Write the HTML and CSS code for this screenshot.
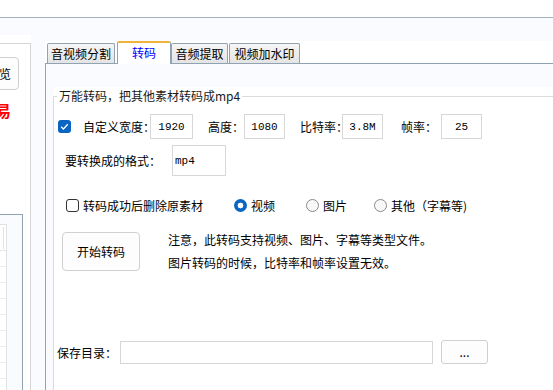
FILE: index.html
```html
<!DOCTYPE html>
<html lang="zh-CN">
<head>
    <meta charset="UTF-8">
    <meta name="viewport" content="width=device-width, initial-scale=1.0">
    <title>转码</title>
    <link rel="stylesheet" href="styles.css">
</head>
<body>
    <div class="topbar"></div>

    <div class="main">
        <aside class="side">
            <div class="side-box">
                <div class="side-btn-row"><button class="btn side-btn">预览</button></div>
                <div class="side-red">交易</div>
                <div class="list-box">
                    <div class="list">
                        <div class="list-head"><span></span></div>
                        <div class="list-row"></div>
                        <div class="list-row"></div>
                        <div class="list-row"></div>
                        <div class="list-row"></div>
                        <div class="list-row"></div>
                        <div class="list-row"></div>
                        <div class="list-row"></div>
                        <div class="list-row"></div>
                        <div class="list-row"></div>
                    </div>
                </div>
            </div>
        </aside>

        <section class="tabs">
            <div class="tab-strip">
                <div class="tab tab-split">音视频分割</div>
                <div class="tab tab-active">转码</div>
                <div class="tab tab-audio">音频提取</div>
                <div class="tab tab-mark">视频加水印</div>
            </div>

            <div class="tab-panel">
                <div class="group">
                    <fieldset class="group-box">
                        <legend>万能转码，把其他素材转码成mp4</legend>

                        <div class="row row-size">
                            <span class="check on">
                                <svg width="13" height="13" viewBox="0 0 13 13"><path d="M3.2 6.8 L5.4 9 L9.8 4.3" fill="none" stroke="#fff" stroke-width="1.3"/></svg>
                            </span>
                            <label class="lbl lbl-width">自定义宽度：</label>
                            <input class="field f-width" type="text" value="1920">
                            <label class="lbl lbl-height">高度：</label>
                            <input class="field f-num" type="text" value="1080">
                            <label class="lbl lbl-rate">比特率：</label>
                            <input class="field f-num" type="text" value="3.8M">
                            <label class="lbl lbl-fps">帧率：</label>
                            <input class="field f-num" type="text" value="25">
                        </div>

                        <div class="row row-format">
                            <label class="lbl lbl-format">要转换成的格式：</label>
                            <input class="field f-format" type="text" value="mp4">
                        </div>

                        <div class="row row-options">
                            <span class="check"></span>
                            <span class="opt-text opt-delete">转码成功后删除原素材</span>
                            <span class="radio on"></span>
                            <span class="opt-text opt-video">视频</span>
                            <span class="radio"></span>
                            <span class="opt-text opt-image">图片</span>
                            <span class="radio"></span>
                            <span class="opt-text">其他（字幕等)</span>
                        </div>

                        <div class="row row-start">
                            <button class="btn start-btn">开始转码</button>
                            <div class="notes">
                                <p>注意，此转码支持视频、图片、字幕等类型文件。</p>
                                <p>图片转码的时候，比特率和帧率设置无效。</p>
                            </div>
                        </div>

                        <div class="row row-save">
                            <label class="lbl lbl-save">保存目录：</label>
                            <input class="field f-path" type="text" value="">
                            <button class="btn browse-btn">...</button>
                        </div>
                    </fieldset>
                </div>
            </div>
        </section>
    </div>
</body>
</html>
```

FILE: styles.css
```css
/* Reset some default styles */
* {
    margin: 0;
    padding: 0;
    box-sizing: border-box;
}

body {
    font-family: "Noto Sans CJK SC", "Noto Sans", sans-serif;
    font-size: 12px;
    color: #1a1a1a;
    background-color: #fafbfe;
    width: 553px;
    height: 390px;
    overflow: hidden;
}

.topbar {
    height: 18px;
    background-color: #fff;
    border-bottom: 1px solid #a3b1bd;
}

.main {
    display: flex;
    gap: 14px;
    height: 372px;
}

/* left panel, mostly cut off */
.side {
    width: 31px;
    flex-shrink: 0;
    margin-top: 17px;
    padding-top: 8px;
    background-color: #fff;
}

.side-box {
    height: 100%;
    border-top: 1px solid #d6d6d6;
    border-right: 1px solid #d6d6d6;
    overflow: hidden;
}

.side-btn-row {
    display: flex;
    justify-content: flex-end;
    padding-right: 11px;
    margin-top: 13px;
}

.side-btn {
    flex-shrink: 0;
    width: 40px;
    height: 33px;
}

.side-red {
    display: flex;
    justify-content: flex-end;
    padding-right: 19px;
    margin-top: 10px;
    color: #ff0000;
    font-size: 16px;
    font-weight: bold;
    line-height: 20px;
    white-space: nowrap;
}

.list-box {
    margin-top: 94px;
    width: 23px;
    height: 200px;
    padding-top: 9px;
    padding-right: 15px;
    background-color: #fafbfe;
    border-top: 1px solid #8fa3b3;
    border-right: 1px solid #8fa3b3;
}

.list {
    height: 100%;
    background-color: #fff;
    border-top: 1px solid #e2e2e2;
    border-right: 1px solid #e2e2e2;
}

.list-head {
    height: 26px;
    border-bottom: 1px solid #e6e6e6;
    padding: 2px 0 0 3px;
}

.list-head span {
    display: block;
    width: 1px;
    height: 22px;
    background-color: #e2e2e2;
}

.list-row {
    height: 16px;
    border-bottom: 1px solid #ececec;
}

/* tab control */
.tabs {
    flex: 1;
    margin-top: 23px;
    display: flex;
    flex-direction: column;
    min-width: 520px;
}

.tab-strip {
    height: 22px;
    display: flex;
    align-items: flex-end;
    padding-left: 2px;
    background-color: #fff;
}

.tab {
    height: 20px;
    line-height: 19px;
    text-align: center;
    white-space: nowrap;
    color: #000;
    border: 1px solid #8fa3b3;
    border-bottom: none;
    border-radius: 2px 2px 0 0;
    background: linear-gradient(#f6f6f6, #e4e4e4);
}

.tab-split {
    width: 68px;
}

.tab-active {
    position: relative;
    z-index: 1;
    width: 54px;
    height: 23px;
    margin: 0 0 -1px 2px;
    line-height: 20px;
    color: #0000ff;
    background: #fff;
    border-top: 2px solid #f0b43c;
}

.tab-audio {
    width: 57px;
}

.tab-mark {
    width: 71px;
    margin-left: 1px;
}

.tab-panel {
    flex: 1;
    border-top: 1px solid #8fa3b3;
    border-left: 1px solid #8fa3b3;
    padding: 23px 0 0 7px;
}

.group {
    height: 100%;
    background-color: #fff;
}

.group-box {
    height: 320px;
    border: 1px solid #dcdcdc;
    padding: 0;
    min-width: 0;
}

.group-box legend {
    margin-left: 3px;
    padding: 0 2px;
    line-height: 18px;
    color: #1a1a1a;
}

.row {
    display: flex;
    align-items: center;
    white-space: nowrap;
}

.lbl {
    color: #000;
    flex-shrink: 0;
}

.field {
    flex-shrink: 0;
    height: 25px;
    border: 1px solid #d7d7d7;
    background-color: #fff;
    font-family: "Liberation Mono", monospace;
    font-size: 11px;
    color: #000;
    text-align: center;
    outline: none;
}

.row-size {
    margin-top: 9px;
    height: 25px;
    padding-left: 4px;
}

.lbl-width {
    margin-left: 12px;
    width: 67px;
}

.f-width {
    width: 43px;
}

.f-num {
    width: 41px;
}

.lbl-height {
    margin-left: 15px;
    width: 36px;
}

.lbl-rate {
    margin-left: 15px;
    width: 42px;
}

.lbl-fps {
    margin-left: 18px;
    width: 40px;
}

.row-format {
    margin-top: 6px;
    height: 31px;
    padding-left: 11px;
}

.lbl-format {
    width: 107px;
}

.f-format {
    width: 54px;
    height: 31px;
    text-align: left;
    padding-left: 2px;
}

.row-options {
    margin-top: 20px;
    height: 19px;
    padding-left: 12px;
}

.check {
    flex-shrink: 0;
    width: 13px;
    height: 13px;
    border: 1px solid #333;
    border-radius: 3px;
    background-color: #fff;
}

.check.on {
    border: none;
    background-color: #0a64c2;
}

.check svg {
    display: block;
}

.radio {
    flex-shrink: 0;
    width: 13px;
    height: 13px;
    border: 1px solid #8a8a8a;
    border-radius: 50%;
    background-color: #f8f8f8;
}

.radio.on {
    border: none;
    background: radial-gradient(circle, #fff 0 2.6px, #0a64c2 3.2px);
}

.opt-text {
    margin-left: 4px;
    color: #000;
}

.opt-delete {
    width: 120px;
    margin-right: 31px;
}

.opt-video {
    width: 24px;
    margin-right: 31px;
}

.opt-image {
    width: 24px;
    margin-right: 27px;
}

.btn {
    font-family: "Noto Sans CJK SC", sans-serif;
    font-size: 12px;
    color: #000;
    background-color: #fdfdfd;
    border: 1px solid #d0d0d0;
    border-radius: 4px;
}

.row-start {
    margin-top: 17px;
    padding-left: 8px;
    align-items: flex-start;
}

.start-btn {
    width: 78px;
    height: 39px;
}

.notes {
    margin: -4px 0 0 28px;
    line-height: 23px;
    color: #000;
}

.row-save {
    margin-top: 66px;
    padding-left: 3px;
}

.lbl-save {
    width: 63px;
}

.f-path {
    width: 313px;
    height: 23px;
}

.browse-btn {
    margin-left: 8px;
    width: 47px;
    height: 24px;
    border-radius: 3px;
    line-height: 14px;
}
```
